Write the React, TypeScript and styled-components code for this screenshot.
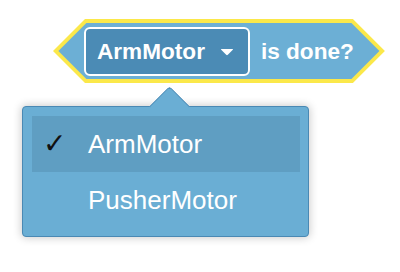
import React from "react";
import styled, { createGlobalStyle } from "styled-components";

const Global = createGlobalStyle`
  html, body { margin: 0; padding: 0; background: #ffffff; }
  body { font-family: "Liberation Sans", Arial, Helvetica, sans-serif; }
`;

const Page = styled.div`
  width: 400px;
  height: 272px;
  display: flex;
  flex-direction: column;
  align-items: flex-start;
  overflow: hidden;
`;

const BlockOutline = styled.div`
  margin: 19px 0 0 53px;
  background: #fbe84a;
  clip-path: polygon(0 32px, 32px 0, calc(100% - 32px) 0, 100% 32px, calc(100% - 32px) 64px, 32px 64px);
`;

const BlockBody = styled.div`
  height: 64px;
  box-sizing: border-box;
  display: flex;
  align-items: center;
  gap: 11px;
  padding: 0 31px 0 31px;
  background: #6cafd5;
  clip-path: polygon(5.4px 32px, 33.4px 4px, calc(100% - 33.4px) 4px, calc(100% - 5.4px) 32px, calc(100% - 33.4px) 60px, 33.4px 60px);
`;

const Field = styled.div`
  height: 49px;
  box-sizing: border-box;
  margin-top: 1px;
  display: flex;
  align-items: center;
  gap: 15px;
  padding: 0 14px 0 11px;
  border: 2px solid #ffffff;
  border-radius: 6px;
  background: #4b8bb5;
  color: #ffffff;
  font-weight: 700;
  font-size: 22.6px;
`;

const Caret = styled.svg`
  width: 14px;
  height: 8px;
  display: block;
`;

const Label = styled.span`
  color: #ffffff;
  font-weight: 700;
  font-size: 22.6px;
  margin-top: 1px;
`;

const Menu = styled.div`
  position: relative;
  margin: 23px 0 0 22px;
  width: 287px;
  box-sizing: border-box;
  padding: 9px 8px 8px 9px;
  background: #6aaed4;
  border: 1px solid #4a89b4;
  border-radius: 4px;
  box-shadow: 0 0 8px 1px rgba(0, 0, 0, 0.2);
`;

const Tail = styled.div`
  position: absolute;
  left: 132px;
  top: -15px;
  width: 28px;
  height: 28px;
  background: #6aaed4;
  border-top: 1px solid #4a89b4;
  border-left: 1px solid #4a89b4;
  border-top-left-radius: 4px;
  transform: rotate(45deg);
`;

const Item = styled.div<{ $active?: boolean }>`
  position: relative;
  height: 56px;
  display: flex;
  align-items: center;
  padding-left: 56px;
  background: ${(p) => (p.$active ? "#5f9ec2" : "transparent")};
  color: #ffffff;
  font-size: 26px;
`;

const Check = styled.span`
  position: absolute;
  left: 11px;
  top: 50%;
  transform: translateY(-50%);
  color: #111111;
  font-family: "DejaVu Sans", sans-serif;
  font-size: 28px;
  line-height: 1;
`;

export default function App() {
  return (
    <Page>
      <Global />
      <BlockOutline>
        <BlockBody>
          <Field>
            ArmMotor
            <Caret viewBox="0 0 14 8">
              <path d="M1.5 1 L12.5 1 Q13.5 1 12.8 1.8 L7.8 6.8 Q7 7.6 6.2 6.8 L1.2 1.8 Q0.5 1 1.5 1 Z" fill="#ffffff" />
            </Caret>
          </Field>
          <Label>is done?</Label>
        </BlockBody>
      </BlockOutline>
      <Menu>
        <Tail />
        <Item $active>
          <Check>✓</Check>
          ArmMotor
        </Item>
        <Item>PusherMotor</Item>
      </Menu>
    </Page>
  );
}
